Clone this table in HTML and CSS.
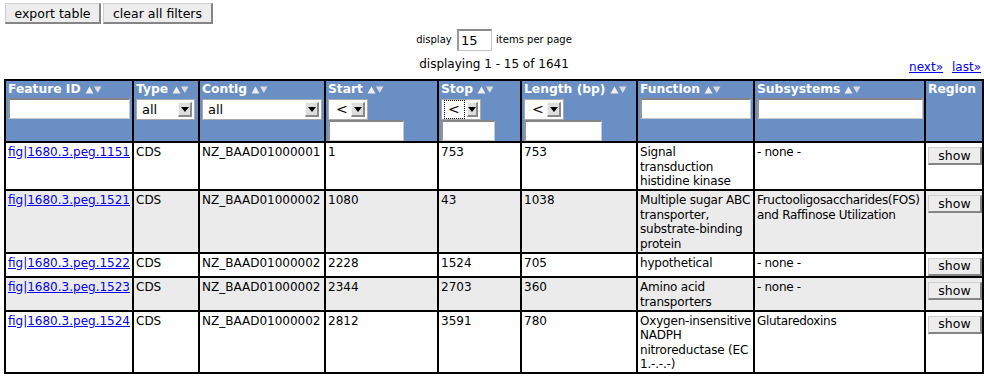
FILE: index.html
```html
<!DOCTYPE html>
<html>
<head>
<meta charset="utf-8">
<title>Features</title>
<link rel="stylesheet" href="styles.css">
</head>
<body>
<div class="page">
  <div class="toolbar">
    <button class="btn btn-export">export table</button>
    <button class="btn btn-clear">clear all filters</button>
  </div>
  <div class="perpage">display <input class="num" value="15"> items per page</div>
  <div class="status">
    <span></span>
    <span class="count">displaying 1 - 15 of 1641</span>
    <span class="nav"><a href="#">next»</a><a href="#">last»</a></span>
  </div>
  <table class="grid">
    <thead>
      <tr>
        <th class="w-id"><div class="lbl">Feature ID<svg class="sort" width="17" height="9" viewBox="0 0 17 9"><polygon points="0.5,8.5 4.5,1.5 8.5,8.5" fill="#eeeeee"/><polygon points="9,1.5 16.5,1.5 12.75,8" fill="#dcdcdc"/></svg></div><input class="ft ft-id"></th>
        <th class="w-type"><div class="lbl">Type<svg class="sort" width="17" height="9" viewBox="0 0 17 9"><polygon points="0.5,8.5 4.5,1.5 8.5,8.5" fill="#eeeeee"/><polygon points="9,1.5 16.5,1.5 12.75,8" fill="#dcdcdc"/></svg></div><div class="sel sel-type"><span class="sv">all</span><span class="sb"><i></i></span></div></th>
        <th class="w-contig"><div class="lbl">Contig<svg class="sort" width="17" height="9" viewBox="0 0 17 9"><polygon points="0.5,8.5 4.5,1.5 8.5,8.5" fill="#eeeeee"/><polygon points="9,1.5 16.5,1.5 12.75,8" fill="#dcdcdc"/></svg></div><div class="sel sel-contig"><span class="sv">all</span><span class="sb"><i></i></span></div></th>
        <th class="w-start"><div class="lbl">Start<svg class="sort" width="17" height="9" viewBox="0 0 17 9"><polygon points="0.5,8.5 4.5,1.5 8.5,8.5" fill="#eeeeee"/><polygon points="9,1.5 16.5,1.5 12.75,8" fill="#dcdcdc"/></svg></div><div class="sel sel-op"><span class="sv">&lt;</span><span class="sb"><i></i></span></div><input class="ft ft-start"></th>
        <th class="w-stop"><div class="lbl">Stop<svg class="sort" width="17" height="9" viewBox="0 0 17 9"><polygon points="0.5,8.5 4.5,1.5 8.5,8.5" fill="#eeeeee"/><polygon points="9,1.5 16.5,1.5 12.75,8" fill="#dcdcdc"/></svg></div><div class="sel sel-op"><span class="sv focus">&lt;</span><span class="sb"><i></i></span></div><input class="ft ft-stop"></th>
        <th class="w-len"><div class="lbl">Length (bp)<svg class="sort" width="17" height="9" viewBox="0 0 17 9"><polygon points="0.5,8.5 4.5,1.5 8.5,8.5" fill="#eeeeee"/><polygon points="9,1.5 16.5,1.5 12.75,8" fill="#dcdcdc"/></svg></div><div class="sel sel-op"><span class="sv">&lt;</span><span class="sb"><i></i></span></div><input class="ft ft-len"></th>
        <th class="w-func"><div class="lbl">Function<svg class="sort" width="17" height="9" viewBox="0 0 17 9"><polygon points="0.5,8.5 4.5,1.5 8.5,8.5" fill="#eeeeee"/><polygon points="9,1.5 16.5,1.5 12.75,8" fill="#dcdcdc"/></svg></div><input class="ft ft-func"></th>
        <th class="w-sub"><div class="lbl">Subsystems<svg class="sort" width="17" height="9" viewBox="0 0 17 9"><polygon points="0.5,8.5 4.5,1.5 8.5,8.5" fill="#eeeeee"/><polygon points="9,1.5 16.5,1.5 12.75,8" fill="#dcdcdc"/></svg></div><input class="ft ft-sub"></th>
        <th class="w-reg"><div class="lbl">Region</div></th>
      </tr>
    </thead>
    <tbody>
      <tr>
        <td><a href="#">fig|1680.3.peg.1151</a></td>
        <td>CDS</td>
        <td>NZ_BAAD01000001</td>
        <td>1</td>
        <td>753</td>
        <td>753</td>
        <td class="func">Signal transduction histidine kinase</td>
        <td class="sub">- none -</td>
        <td class="reg"><button class="show">show</button></td>
      </tr>
      <tr class="alt">
        <td><a href="#">fig|1680.3.peg.1521</a></td>
        <td>CDS</td>
        <td>NZ_BAAD01000002</td>
        <td>1080</td>
        <td>43</td>
        <td>1038</td>
        <td class="func">Multiple sugar ABC transporter, substrate-binding protein</td>
        <td class="sub">Fructooligosaccharides(FOS) and Raffinose Utilization</td>
        <td class="reg"><button class="show">show</button></td>
      </tr>
      <tr>
        <td><a href="#">fig|1680.3.peg.1522</a></td>
        <td>CDS</td>
        <td>NZ_BAAD01000002</td>
        <td>2228</td>
        <td>1524</td>
        <td>705</td>
        <td class="func">hypothetical</td>
        <td class="sub">- none -</td>
        <td class="reg"><button class="show">show</button></td>
      </tr>
      <tr class="alt">
        <td><a href="#">fig|1680.3.peg.1523</a></td>
        <td>CDS</td>
        <td>NZ_BAAD01000002</td>
        <td>2344</td>
        <td>2703</td>
        <td>360</td>
        <td class="func">Amino acid transporters</td>
        <td class="sub">- none -</td>
        <td class="reg"><button class="show">show</button></td>
      </tr>
      <tr>
        <td><a href="#">fig|1680.3.peg.1524</a></td>
        <td>CDS</td>
        <td>NZ_BAAD01000002</td>
        <td>2812</td>
        <td>3591</td>
        <td>780</td>
        <td class="func">Oxygen-insensitive NADPH nitroreductase (EC 1.-.-.-)</td>
        <td class="sub">Glutaredoxins</td>
        <td class="reg"><button class="show">show</button></td>
      </tr>
    </tbody>
  </table>
</div>
</body>
</html>
```
FILE: styles.css
```css
* { box-sizing: border-box; }
html, body { background: #fff; }
body {
  margin: 0;
  padding: 3px 0 0 4px;
  font-family: "DejaVu Sans", Verdana, sans-serif;
  font-size: 12px;
  color: #000;
}
.page { width: 980px; }

.toolbar { display: flex; gap: 2px; padding-left: 1px; }
.btn {
  font-family: "DejaVu Sans", Verdana, sans-serif;
  font-size: 12.5px;
  height: 21px;
  padding: 0;
  margin: 0;
  background: #ededed;
  color: #000;
  border: 1px solid #cfcfcf;
  border-right: 2px solid #858585;
  border-bottom: 2px solid #858585;
}
.btn-export { width: 96px; }
.btn-clear { width: 110px; }

.perpage {
  margin-top: 5px;
  text-align: center;
  font-size: 10px;
  line-height: 22px;
  height: 22px;
}
.num {
  width: 35px;
  height: 22px;
  margin: 0 1px 0 2px;
  padding: 0 2px;
  font-family: "DejaVu Sans", Verdana, sans-serif;
  font-size: 13px;
  vertical-align: top;
  border: 1px solid #c4c4c4;
  border-top: 2px solid #8a8a8a;
  border-left: 2px solid #9a9a9a;
}

.status {
  display: grid;
  grid-template-columns: 1fr auto 1fr;
  height: 22px;
  margin-top: 6px;
  line-height: 15px;
}
.count { font-size: 12px; }
.nav { justify-self: end; margin-top: 3px; padding-right: 3px; display: flex; gap: 9px; }
a { color: #0000ee; text-decoration: underline; }

.grid {
  width: 980px;
  table-layout: fixed;
  border-collapse: separate;
  border-spacing: 0;
  border: 1px solid #000;
}
.grid th, .grid td {
  border: 1px solid #000;
  text-align: left;
  vertical-align: top;
  line-height: 14.5px;
}
.grid th {
  background: #6a8fc5;
  color: #fff;
  font-weight: bold;
  padding: 1px 2px 0 2px;
}
.grid td { padding: 2px 2px 0.5px 2px; background: #fff; }
.grid tr.alt td { background: #ebebeb; }
.grid td.func { padding-right: 0.7px; letter-spacing: -0.2px; }
.grid td.sub { padding-right: 0; letter-spacing: -0.3px; }

.w-id { width: 128px; }
.w-type { width: 66px; }
.w-contig { width: 126px; }
.w-start { width: 113px; }
.w-stop { width: 83px; }
.w-len { width: 116px; }
.w-func { width: 117px; }
.w-sub { width: 171px; }
.w-reg { width: 58px; }

.lbl { height: 15px; line-height: 15px; white-space: nowrap; font-size: 12.3px; }
.sort { margin-left: 4px; vertical-align: -1px; }

.ft {
  display: block;
  height: 21px;
  margin: 1px 0 0 0;
  padding: 0 2px;
  background: #fff;
  font-size: 12px;
  border: 1px solid #c8c8c8;
  border-top: 2px solid #858585;
  border-left: 2px solid #959595;
}
.ft-id { width: 122px; }
.ft-func { width: 111px; }
.ft-sub { width: 166px; }
.ft-start { width: 76px; margin-top: 0; }
.ft-stop { width: 54px; margin-top: 0; }
.ft-len { width: 78px; margin-top: 0; }

.sel {
  display: flex;
  align-items: center;
  height: 21px;
  margin-top: 2px;
  background: #fff;
  border: 1px solid #a9a9a9;
  color: #000;
  font-weight: normal;
  font-size: 13px;
  padding: 0 2px 0 3px;
}
.sel-type { width: 59px; }
.sel-contig { width: 120px; }
.sel-op { width: 40px; }
.sv { flex: 1; line-height: 17px; padding-left: 2px; }
.sel-op .sv { padding-left: 4px; font-size: 14px; }
.sv.focus { outline: 1px dotted #000; outline-offset: 0; flex: 0 0 19px; margin-right: 3px; padding-left: 3px; height: 17px; }
.sb {
  width: 14px;
  height: 15px;
  background: #dedede;
  border: 1px solid #f4f4f4;
  border-right: 2px solid #8a8a8a;
  border-bottom: 2px solid #8a8a8a;
  display: flex;
  align-items: center;
  justify-content: center;
}
.sb i {
  display: block;
  width: 0;
  height: 0;
  border-left: 4px solid transparent;
  border-right: 4px solid transparent;
  border-top: 5px solid #000;
}

.grid td.reg { padding: 2px 1px 0.5px 2px; }
.show {
  display: block;
  width: 54px;
  height: 18px;
  margin: 2px 0 0 0;
  padding: 0;
  font-family: "DejaVu Sans", Verdana, sans-serif;
  font-size: 12.5px;
  line-height: 14px;
  background: #ededed;
  color: #000;
  border: 1px solid #d0d0d0;
  border-right: 2px solid #858585;
  border-bottom: 2px solid #858585;
}
```
